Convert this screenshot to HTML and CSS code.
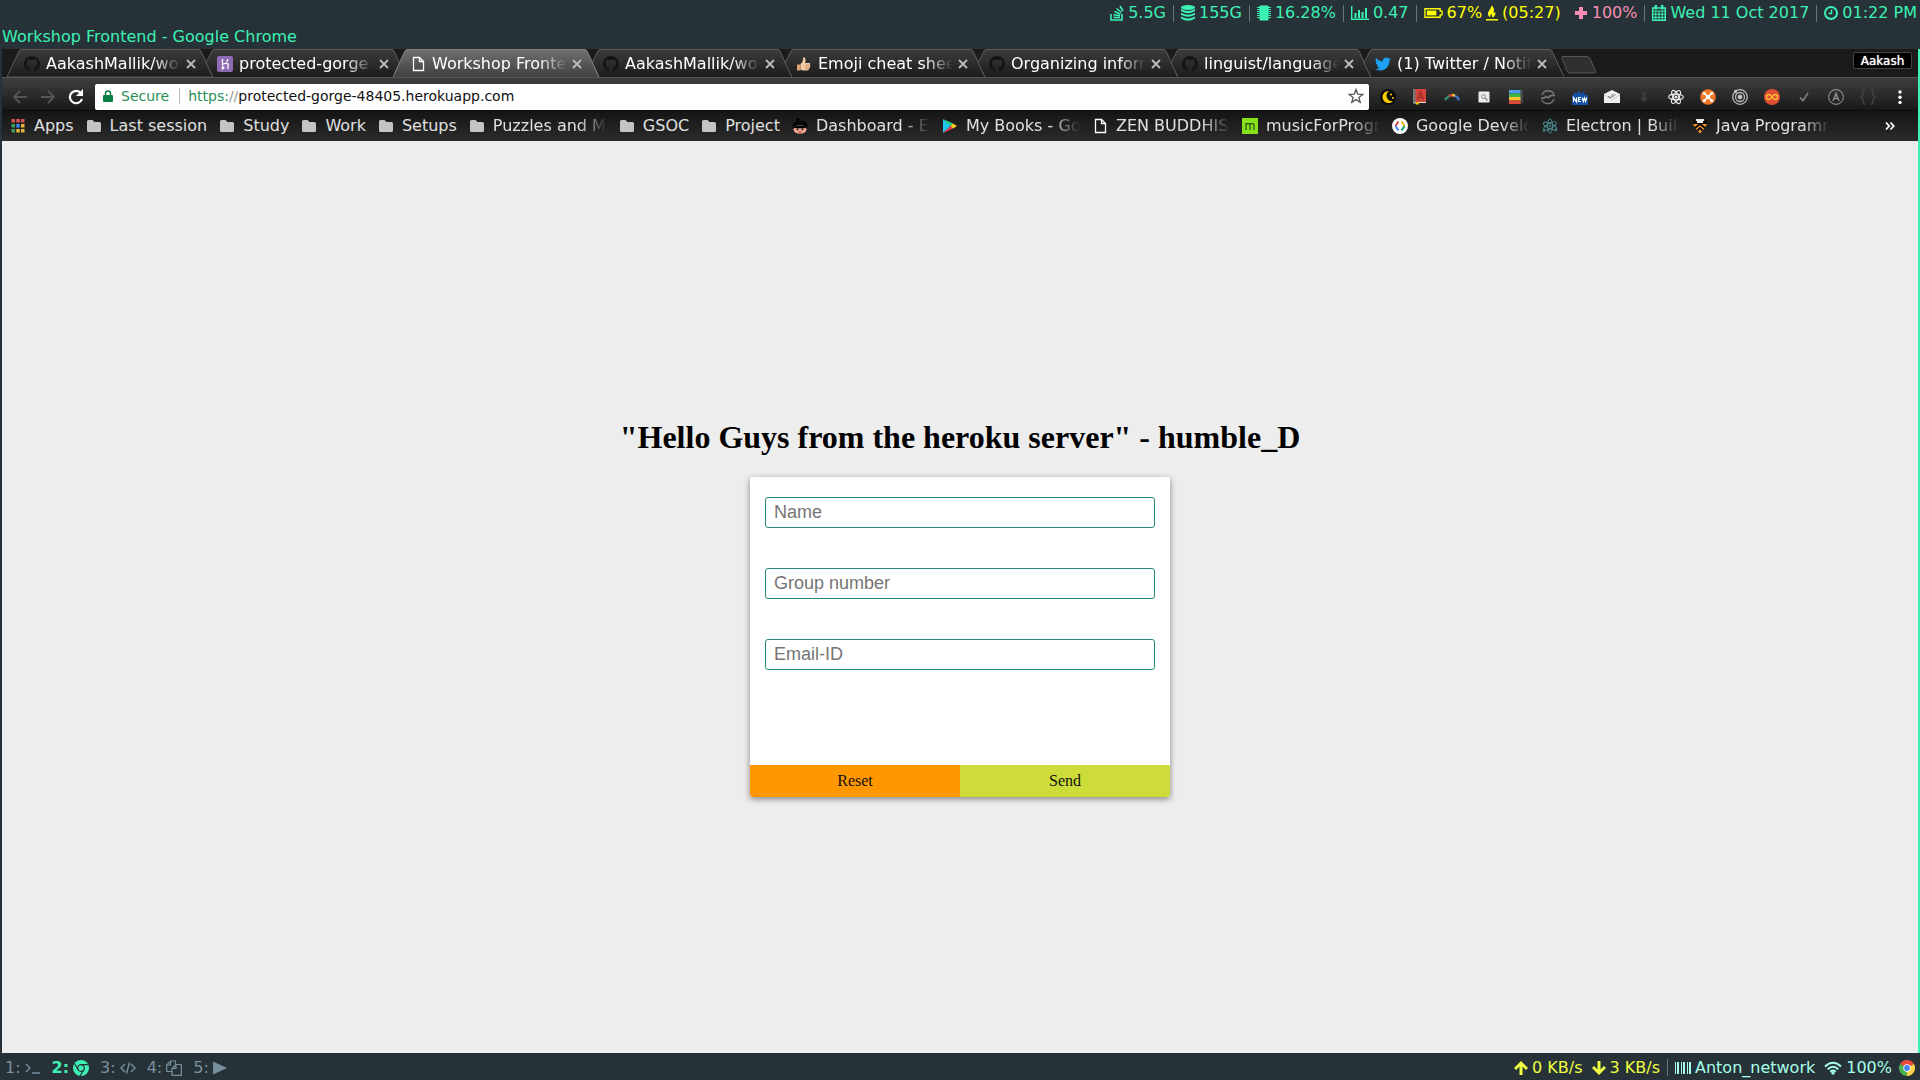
FILE: index.html
```html
<!DOCTYPE html>
<html lang="en">
<head>
<meta charset="utf-8">
<meta name="viewport" content="width=device-width, initial-scale=1">
<title>Workshop Frontend - Google Chrome</title>
<link rel="stylesheet" href="styles.css">
</head>
<body>
<svg class="defs" aria-hidden="true">
  <defs>
    <linearGradient id="tab-fill" x1="0" y1="0" x2="0" y2="1"><stop offset="0" stop-color="#3c3c3c"/><stop offset="1" stop-color="#1c1c1c"/></linearGradient>
    <linearGradient id="tab-fill-active" x1="0" y1="0" x2="0" y2="1"><stop offset="0" stop-color="#707070"/><stop offset="1" stop-color="#404040"/></linearGradient>
    <symbol id="github" viewBox="0 0 16 16"><path d="M8 0C3.58 0 0 3.58 0 8c0 3.54 2.29 6.53 5.47 7.59.4.07.55-.17.55-.38 0-.19-.01-.82-.01-1.49-2.01.37-2.53-.49-2.69-.94-.09-.23-.48-.94-.82-1.13-.28-.15-.68-.52-.01-.53.63-.01 1.08.58 1.23.82.72 1.21 1.87.87 2.33.66.07-.52.28-.87.51-1.07-1.78-.2-3.64-.89-3.64-3.95 0-.87.31-1.59.82-2.15-.08-.2-.36-1.02.08-2.12 0 0 .67-.21 2.2.82a7.6 7.6 0 0 1 4 0c1.53-1.04 2.2-.82 2.2-.82.44 1.1.16 1.92.08 2.12.51.56.82 1.27.82 2.15 0 3.07-1.87 3.75-3.65 3.95.29.25.54.73.54 1.48 0 1.07-.01 1.93-.01 2.2 0 .21.15.46.55.38A8 8 0 0 0 16 8c0-4.42-3.58-8-8-8z" fill="#151515"/></symbol>
    <symbol id="file" viewBox="0 0 16 16"><path d="M3.500 1.500H9.500L13.500 5.500V14.500H3.500zM9.500 1.500V5.500H13.500" fill="none" stroke="#fff" stroke-width="1.300"/></symbol>
    <symbol id="folder" viewBox="0 0 16 16"><path d="M1 3.500Q1 2 2.500 2H6.500L8.500 4H13.500Q15 4 15 5.500V12.500Q15 14 13.500 14H2.500Q1 14 1 12.500z" fill="#c4c4c4"/></symbol>
    <symbol id="cross" viewBox="0 0 16 16"><path d="M4 4L12 12M12 4L4 12" stroke="#bdbdbd" stroke-width="1.800"/></symbol>
    <symbol id="tab-full" viewBox="0 0 206 28"><path d="M0 28L12 2Q13 .5 14 .5H192Q193 .5 194 2L206 28z"/></symbol>
    <symbol id="tab-open" viewBox="0 0 206 28"><path d="M0 28L12 2Q13 .5 14 .5H192Q193 .5 194 2L206 28"/></symbol>
    <symbol id="tab-notch" viewBox="0 0 206 28"><path d="M13 28L6 14L12 2Q13 .5 14 .5H192Q193 .5 194 2L206 28"/></symbol>
  </defs>
</svg>

<header class="status">
  <span class="stat"><svg class="ico" viewBox="0 0 14 16" fill="none" stroke="currentColor" stroke-width="1.600"><path d="M1 9V15H12V9M3.500 12.500H10M3.500 9.800L10 10.800M4.500 6.500L10.500 9.300M6.500 3.500L11.500 7.500M10 1L13 6"/></svg>5.5G</span>
  <i class="sep"></i>
  <span class="stat"><svg class="ico" viewBox="1 0 14 16" fill="currentColor"><ellipse cx="8" cy="2.500" rx="7" ry="2.500"/><path d="M1 4Q8 8 15 4V6Q8 10.500 1 6zM1 7.700Q8 12 15 7.700V9.700Q8 14 1 9.700zM1 11.400Q8 15.500 15 11.400V13.500Q8 18 1 13.500z"/></svg>155G</span>
  <i class="sep"></i>
  <span class="stat"><svg class="ico" viewBox="1 0 14 16"><path d="M3.500.5H12.500V15.500H3.500z" fill="currentColor"/><path d="M1 2.500H15M1 4.500H15M1 6.500H15M1 8.500H15M1 10.500H15M1 12.500H15" stroke="currentColor"/></svg>16.28%</span>
  <i class="sep"></i>
  <span class="stat"><svg class="ico wide" viewBox="0 0 18 16"><path d="M.7 1V14.300H18" fill="none" stroke="currentColor" stroke-width="1.400"/><path d="M4.500 8V13M8 5V13M11.500 7V13M15 3V13" stroke="currentColor" stroke-width="2"/></svg>0.47</span>
  <i class="sep"></i>
  <span class="stat yellow"><svg class="ico battery" viewBox="0 0 20 16"><path d="M1 3.500H17V6H19V10H17V12.500H1z" fill="none" stroke="currentColor" stroke-width="1.400"/><path d="M3 5.500H13V10.500H3z" fill="currentColor"/></svg>67%<svg class="ico flame" viewBox="2 0 13 16" fill="currentColor"><path d="M2 14.500H15V16H2zM8 0Q7.500 3 5 6T6.500 13Q6 10 8.500 8.500Q7.500 11 9.500 13Q13 10 12 7Q11 8 10 7.500Q12 3 8 0z"/></svg>(05:27)</span>
  <span class="stat pink"><svg class="ico" viewBox="1 0 14 16"><path d="M8 2V14M2 8H14" stroke="currentColor" stroke-width="4"/></svg>100%</span>
  <i class="sep"></i>
  <span class="stat"><svg class="ico" viewBox="1 0 14 16"><path d="M1.700 3H14.300V15.300H1.700z" fill="none" stroke="currentColor" stroke-width="1.400"/><path d="M4.800 0V4.500M11.200 0V4.500" stroke="currentColor" stroke-width="2.400"/><path d="M1 6H15M1 9.200H15M1 12.300H15M4.800 6V15M8 6V15M11.200 6V15" stroke="currentColor"/></svg>Wed 11 Oct 2017</span>
  <i class="sep"></i>
  <span class="stat"><svg class="ico" viewBox="1 0 14 16" fill="none" stroke="currentColor" stroke-width="2"><circle cx="8" cy="8" r="6"/><path d="M8.500 4.500V8.500H5.500" stroke-width="1.500"/></svg>01:22 PM</span>
</header>
<p class="window-title">Workshop Frontend - Google Chrome</p>

<div class="window">
  <nav class="tabs" aria-label="Tabs">
    <div class="tab"><svg class="tab-shape"><use href="#tab-full"/></svg><svg class="ico"><use href="#github"/></svg><span class="fade tab-title">AakashMallik/wo</span><button class="plain" aria-label="Close tab"><svg class="ico"><use href="#cross"/></svg></button></div>
    <div class="tab"><svg class="tab-shape"><use href="#tab-notch"/></svg><svg class="ico" viewBox="0 0 16 16"><rect width="16" height="16" rx="2" fill="#8f6bb5"/><path d="M5.500 3V8.500Q8 7 10 7.500T11 10V13M10.800 3Q10.800 4.500 9.500 6M5.500 10.500V13L7 11.800z" fill="none" stroke="#fff" stroke-width="1.300"/></svg><span class="fade tab-title">protected-gorge</span><button class="plain" aria-label="Close tab"><svg class="ico"><use href="#cross"/></svg></button></div>
    <div class="tab active"><svg class="tab-shape"><use href="#tab-open"/></svg><svg class="ico"><use href="#file"/></svg><span class="fade tab-title">Workshop Fronte</span><button class="plain" aria-label="Close tab"><svg class="ico"><use href="#cross"/></svg></button></div>
    <div class="tab"><svg class="tab-shape"><use href="#tab-notch"/></svg><svg class="ico"><use href="#github"/></svg><span class="fade tab-title">AakashMallik/wo</span><button class="plain" aria-label="Close tab"><svg class="ico"><use href="#cross"/></svg></button></div>
    <div class="tab"><svg class="tab-shape"><use href="#tab-notch"/></svg><svg class="ico" viewBox="0 0 16 16"><path d="M1 8.500H4.500V14.500H1z" fill="#d9a577"/><path d="M4.500 8Q7.500 5.500 7 2Q8 .5 9.200 2.500Q10 4.500 9 7H13.500Q15 7.500 14 9Q15 10 13.800 11Q14.500 12 13 12.700Q13 14.500 11 14.500H7L4.500 13.500z" fill="#f5cba3"/><path d="M9.500 9H14M9.500 11H13.500M9 12.800H13" stroke="#b87f4f" stroke-width=".7"/></svg><span class="fade tab-title">Emoji cheat shee</span><button class="plain" aria-label="Close tab"><svg class="ico"><use href="#cross"/></svg></button></div>
    <div class="tab"><svg class="tab-shape"><use href="#tab-notch"/></svg><svg class="ico"><use href="#github"/></svg><span class="fade tab-title">Organizing inforr</span><button class="plain" aria-label="Close tab"><svg class="ico"><use href="#cross"/></svg></button></div>
    <div class="tab"><svg class="tab-shape"><use href="#tab-notch"/></svg><svg class="ico"><use href="#github"/></svg><span class="fade tab-title">linguist/language</span><button class="plain" aria-label="Close tab"><svg class="ico"><use href="#cross"/></svg></button></div>
    <div class="tab"><svg class="tab-shape"><use href="#tab-notch"/></svg><svg class="ico" viewBox="0 0 24 24"><path d="M23.950 4.570a10 10 0 0 1-2.820.77 4.960 4.960 0 0 0 2.160-2.720c-.95.550-2 .95-3.130 1.180a4.920 4.920 0 0 0-8.380 4.480C7.690 8.090 4.070 6.130 1.640 3.160a4.920 4.920 0 0 0 1.520 6.570 4.900 4.900 0 0 1-2.230-.61v.06a4.920 4.920 0 0 0 3.950 4.830 5 5 0 0 1-2.210.08 4.940 4.940 0 0 0 4.600 3.420A9.870 9.870 0 0 1 0 19.540a13.990 13.990 0 0 0 7.550 2.210c9.050 0 14-7.500 14-13.980 0-.21 0-.42-.02-.63a9.940 9.940 0 0 0 2.420-2.570z" fill="#1da1f2"/></svg><span class="fade tab-title">(1) Twitter / Notif</span><button class="plain" aria-label="Close tab"><svg class="ico"><use href="#cross"/></svg></button></div>
    <button class="plain new-tab" aria-label="New tab"><svg width="36" height="18" viewBox="0 0 36 18"><path d="M2 .5H26Q28 .5 29 2.500L34.500 15Q35 17 33 17H9Q7 17 6 15L.8 2.500Q.3.5 2 .5z" fill="#303030" stroke="#565656"/></svg></button>
    <button class="profile">Aakash</button>
  </nav>

  <div class="toolbar">
    <div class="nav-buttons">
      <button class="plain" aria-label="Back"><svg class="ico" viewBox="0 0 16 16"><path d="M15 8H2M8 2L2 8L8 14" fill="none" stroke="#555" stroke-width="1.800"/></svg></button>
      <button class="plain" aria-label="Forward"><svg class="ico" viewBox="0 0 16 16"><path d="M1 8H14M8 2L14 8L8 14" fill="none" stroke="#555" stroke-width="1.800"/></svg></button>
      <button class="plain" aria-label="Reload"><svg class="ico" viewBox="0 0 16 16"><path d="M13 4.200A6.200 6.200 0 1 0 14 10" fill="none" stroke="#fff" stroke-width="2.200"/><path d="M15 0V7H8z" fill="#fff"/></svg></button>
    </div>
    <div class="omnibox">
      <svg class="lock" viewBox="0 0 10 12"><path d="M1 5H9Q10 5 10 6V11Q10 12 9 12H1Q0 12 0 11V6Q0 5 1 5z" fill="#0b8043"/><path d="M2.500 5.500V3.300Q2.500 1 5 1T7.500 3.300V5.500" fill="none" stroke="#0b8043" stroke-width="1.500"/></svg>
      <span class="secure">Secure</span>
      <span class="scheme">https:<span class="slashes">//</span></span>
      <input class="url" type="text" aria-label="Address" value="protected-gorge-48405.herokuapp.com">
      <button class="plain" aria-label="Bookmark this page"><svg class="ico" viewBox="0 0 16 16"><path d="M8 1.500L9.800 6.200L14.700 6.400L10.900 9.500L12.200 14.300L8 11.600L3.800 14.300L5.100 9.500L1.300 6.400L6.200 6.200z" fill="none" stroke="#555" stroke-width="1.300"/></svg></button>
    </div>
    <div class="extensions">
      <svg class="ico" viewBox="0 0 16 16"><circle cx="8" cy="8" r="8" fill="#0c0c0c"/><path d="M9 2A6 6 0 1 0 13 12A5.500 5.500 0 0 1 9 2z" fill="#fc0"/><path d="M10 5.500H12M11 4.500V6.500M12 9H14M13 8V10" stroke="#fc0"/></svg>
      <svg class="ico" viewBox="0 0 16 16"><path d="M1 0H4V15H1z" fill="#777"/><path d="M3.500 0H14V13H3.500z" fill="#d5443b"/><path d="M5.500 11L8.500 3L11.500 11M6.500 8.500H10.500" fill="none" stroke="#a82e28" stroke-width="1.500"/><path d="M3 13.500H14" stroke="#ddd"/><path d="M4 13H7V16L5.500 15L4 16z" fill="#f4c20d"/></svg>
      <svg class="ico" viewBox="0 0 16 16" fill="none" stroke-width="2.500"><path d="M1 11Q3 8 6 6.500" stroke="#2e8b6f"/><path d="M5 7L8 5.800" stroke="#e34133"/><path d="M8 5.800L11 6.800" stroke="#f7c04a"/><path d="M11 6.800Q14 8 15 11" stroke="#3975c6"/></svg>
      <svg class="ico" viewBox="0 0 16 16"><rect x="2.500" y="2.500" width="11" height="11" rx="1" fill="#eee"/><circle cx="7.500" cy="7.500" r="2" fill="none" stroke="#888"/><path d="M9 9L11.500 11.500" stroke="#888" stroke-width="1.300"/></svg>
      <svg class="ico" viewBox="0 0 16 16"><path d="M12 1H15V14L12 15z" fill="#454545"/><path d="M1 1H12.500V4.500H1z" fill="#4d9af0"/><path d="M1 4.500H12.500V8H1z" fill="#3cb54a"/><path d="M1 8H12.500V11.500H1z" fill="#fdc82f"/><path d="M1 11.500H12.500V15H1z" fill="#dd4b39"/></svg>
      <svg class="ico" viewBox="0 0 16 16" fill="none" stroke="#777"><path d="M2 6A6.500 6.500 0 0 1 14 5.500M14 10A6.500 6.500 0 0 1 2 11" stroke-width="1.400"/><path d="M1 9Q4 10 6 7.500Q8 10 10 7Q12 6 15 6.500" stroke-width="1.800"/></svg>
      <svg class="ico" viewBox="0 0 16 16"><path d="M0 6H2L3 3L5 5L7 1L9 5L12 2L13 6H16V16H0z" fill="#124fa5"/><path d="M1.500 13V8.500L4.500 13V8.500M9 8.500H6.500V12.500H9M6.500 10.500H8.500M10.200 8.500L11.300 12.500L12.500 9L13.600 12.500L14.800 8.500" fill="none" stroke="#fff" stroke-width="1.200"/></svg>
      <svg class="ico" viewBox="0 0 16 16"><path d="M0 5L8 1L16 5V14H0z" fill="#f0f0f0"/><path d="M0 5.500L8 11L16 5.500" fill="none" stroke="#ccc"/><path d="M4 7L6 9L9 5M8 8.500L11.500 5" fill="none" stroke="#666"/></svg>
      <svg class="ico" viewBox="0 0 16 16"><path d="M6.500 3H9.500V9H12L8 13L4 9H6.500z" fill="#3d3d3d"/></svg>
      <svg class="ico" viewBox="0 0 16 16" fill="none" stroke="#e8e8e8" stroke-width="1.200"><ellipse cx="8" cy="8" rx="7.300" ry="2.800"/><ellipse cx="8" cy="8" rx="7.300" ry="2.800" transform="rotate(60 8 8)"/><ellipse cx="8" cy="8" rx="7.300" ry="2.800" transform="rotate(120 8 8)"/><circle cx="8" cy="8" r="1" fill="#fff"/></svg>
      <svg class="ico" viewBox="0 0 16 16"><circle cx="8" cy="8" r="7.800" fill="#f37626"/><path d="M4 4L12 12M12 4L4 12" stroke="#fff" stroke-width="1.600"/><circle cx="8" cy="8" r="2.300" fill="#fff"/><circle cx="4.200" cy="4.200" r="1.500" fill="#fff"/><circle cx="11.800" cy="4.200" r="1.500" fill="#fff"/><circle cx="4.200" cy="11.800" r="1.500" fill="#fff"/><circle cx="11.800" cy="11.800" r="1.500" fill="#fff"/></svg>
      <svg class="ico" viewBox="0 0 16 16" fill="none" stroke="#bbb" stroke-width="1.300"><circle cx="8" cy="8" r="7.300"/><circle cx="8" cy="8" r="4.500"/><circle cx="8" cy="8" r="1.800" fill="#ccc"/><circle cx="3.500" cy="2.500" r="1" fill="#ccc"/></svg>
      <svg class="ico" viewBox="0 0 16 16"><circle cx="8" cy="8" r="8" fill="#dd4d35"/><path d="M8 8C6 4.500 2.500 5 2.500 8S6 11.500 8 8S13.500 5 13.500 8S10 11.500 8 8z" fill="none" stroke="#ffc02e" stroke-width="1.400"/></svg>
      <svg class="ico" viewBox="0 0 16 16"><path d="M4 8.500L7 11.500L12 4" fill="none" stroke="#777" stroke-width="1.800"/></svg>
      <svg class="ico" viewBox="0 0 16 16" fill="none" stroke="#8a8a8a"><circle cx="8" cy="8" r="7.400" stroke-width="1.100"/><path d="M5 12L8 4.500L11 12M6 9.500H10" stroke-width="1.600"/></svg>
      <svg class="ico" viewBox="0 0 16 16" fill="none" stroke="#444" stroke-width="1.300"><path d="M5 1Q3 1 3 3V6L1 8L3 10V13Q3 15 5 15M11 1Q13 1 13 3V6L15 8L13 10V13Q13 15 11 15"/></svg>
      <button class="plain" aria-label="Menu"><svg class="ico" viewBox="0 0 16 16" fill="#fff"><circle cx="8" cy="3" r="1.700"/><circle cx="8" cy="8.200" r="1.700"/><circle cx="8" cy="13.400" r="1.700"/></svg></button>
    </div>
  </div>

  <nav class="bookmarks" aria-label="Bookmarks">
    <a href="#"><svg class="ico" viewBox="0 0 16 16"><path d="M1.500 1H5V4.500H1.500zM6.300 1H9.800V4.500H6.300zM11 1H14.500V4.500H11z" fill="#d9534f"/><path d="M1.500 6H5V9.500H1.500z" fill="#3f9d5c"/><path d="M6.300 6H9.800V9.500H6.300z" fill="#4285f4"/><path d="M11 6H14.500V9.500H11zM6.300 11H9.800V14.500H6.300zM11 11H14.500V14.500H11z" fill="#e9b537"/><path d="M1.500 11H5V14.500H1.500z" fill="#3f9d5c"/></svg><span>Apps</span></a>
    <a href="#"><svg class="ico"><use href="#folder"/></svg><span>Last session</span></a>
    <a href="#"><svg class="ico"><use href="#folder"/></svg><span>Study</span></a>
    <a href="#"><svg class="ico"><use href="#folder"/></svg><span>Work</span></a>
    <a href="#"><svg class="ico"><use href="#folder"/></svg><span>Setups</span></a>
    <a href="#"><svg class="ico"><use href="#folder"/></svg><span class="fade long">Puzzles and M</span></a>
    <a href="#"><svg class="ico"><use href="#folder"/></svg><span>GSOC</span></a>
    <a href="#"><svg class="ico"><use href="#folder"/></svg><span>Project</span></a>
    <a href="#"><svg class="ico" viewBox="0 0 16 16"><circle cx="6" cy="1.800" r="1.800" fill="#000"/><ellipse cx="8" cy="7.500" rx="7.500" ry="5" fill="#070707"/><ellipse cx="8" cy="11.500" rx="6.500" ry="4.300" fill="#efa68d"/><path d="M1.500 9.500Q8 5.500 14.500 9.500L12 10.200H4z" fill="#000"/><circle cx="5.500" cy="11.300" r="1" fill="#222"/><circle cx="10.500" cy="11.300" r="1" fill="#222"/><path d="M6.500 14H9.500" stroke="#a5323a"/></svg><span class="fade long">Dashboard - E</span></a>
    <a href="#"><svg class="ico" viewBox="0 0 16 16"><path d="M1 1V15L8.500 8z" fill="#22c7f3"/><path d="M1 1L11 5.500L8.500 8z" fill="#25d58a"/><path d="M1 15L11 10.500L8.500 8z" fill="#ed3c55"/><path d="M11 5.500L15 8L11 10.500L8.500 8z" fill="#ffce18"/></svg><span class="fade long">My Books - Go</span></a>
    <a href="#"><svg class="ico"><use href="#file"/></svg><span class="fade long">ZEN BUDDHIS</span></a>
    <a href="#"><svg class="ico" viewBox="0 0 16 16"><path d="M0 0H16V16H0z" fill="#87e21c"/><path d="M4 12V5M4 7Q4 5.500 6 5.500T8 7V12M8 7Q8 5.500 10 5.500T12 7V12" fill="none" stroke="#315a0b" stroke-width="1.300"/></svg><span class="fade long">musicForProgr</span></a>
    <a href="#"><svg class="ico" viewBox="0 0 16 16" fill="none" stroke-width="2"><circle cx="8" cy="8" r="8" fill="#fff"/><path d="M6.500 3.500L3.500 8" stroke="#db4437"/><path d="M3.500 8L6.500 12.500" stroke="#4285f4"/><path d="M9.500 3.500L12.500 8" stroke="#f4b400"/><path d="M12.500 8L9.500 12.500" stroke="#0f9d58"/></svg><span class="fade long">Google Develo</span></a>
    <a href="#"><svg class="ico" viewBox="0 0 16 16" fill="none" stroke="#478b91"><ellipse cx="8" cy="8" rx="7" ry="2.600" transform="rotate(25 8 8)"/><ellipse cx="8" cy="8" rx="7" ry="2.600" transform="rotate(90 8 8)"/><ellipse cx="8" cy="8" rx="7" ry="2.600" transform="rotate(150 8 8)"/><circle cx="8" cy="8" r=".8"/><circle cx="2" cy="12.500" r="1"/><circle cx="14" cy="12" r="1"/></svg><span class="fade long">Electron | Build</span></a>
    <a href="#"><svg class="ico" viewBox="0 0 16 16"><path d="M4 1H12V5H4z" fill="#e8e8e8"/><path d="M1 3H5V5H11V3H15V6H1z" fill="#080808"/><path d="M1 6H15L12 11L8 15.500L4 11z" fill="#f0932b"/><path d="M3 10L8 6L13 10M5.500 12.500L8 10L10.500 12.500" fill="none" stroke="#0b0b0b" stroke-width="1.800"/></svg><span class="fade long">Java Programr</span></a>
    <button class="plain more" aria-label="More bookmarks"><svg class="ico" viewBox="0 0 16 16"><path d="M4 4.500L7.200 8L4 11.500M8.500 4.500L11.700 8L8.500 11.500" fill="none" stroke="#fff" stroke-width="1.800"/></svg></button>
  </nav>

  <main class="page">
    <h1>"Hello Guys from the heroku server" - humble_D</h1>
    <form class="card">
      <div class="fields">
        <input type="text" placeholder="Name" aria-label="Name">
        <input type="text" placeholder="Group number" aria-label="Group number">
        <input type="email" placeholder="Email-ID" aria-label="Email-ID">
      </div>
      <div class="actions">
        <button class="reset" type="reset">Reset</button>
        <button class="send" type="submit">Send</button>
      </div>
    </form>
  </main>
</div>

<footer class="footer">
  <nav class="workspaces" aria-label="Workspaces">
    <a href="#">1:<svg class="ico" viewBox="0 0 16 16" fill="none" stroke="currentColor" stroke-width="1.400"><path d="M1 4L5 8L1 12M7 13H15"/></svg></a>
    <a class="current" href="#">2:<svg class="ico" viewBox="0 0 16 16"><circle cx="8" cy="8" r="8" fill="currentColor"/><circle cx="8" cy="8" r="3.300" fill="none" stroke="#263238" stroke-width="1.200"/><path d="M8 4.700H15.500M5.200 9.700L1.500 3.500M10.800 9.700L7 16" stroke="#263238" stroke-width="1.200"/></svg></a>
    <a href="#">3:<svg class="ico" viewBox="0 0 16 16" fill="none" stroke="currentColor" stroke-width="1.400"><path d="M5 4L1 8L5 12M11 4L15 8L11 12M9.500 2.500L6.500 13.500"/></svg></a>
    <a href="#">4:<svg class="ico" viewBox="0 0 16 16" fill="none" stroke="currentColor" stroke-width="1.200"><path d="M6 11.500H.7V5L4.500 1H9.500V4.500M4.500 1V5H.7M6 8.500L10 4.500H15.300V15.300H6zM10 4.500V8.500H6"/></svg></a>
    <a href="#">5:<svg class="ico" viewBox="0 0 16 16"><path d="M0 1.500L14 8L0 14.500z" fill="currentColor"/></svg></a>
  </nav>
  <div class="network">
    <span class="stat lime"><svg class="ico" viewBox="1 0 14 16" fill="none" stroke="currentColor" stroke-width="3"><path d="M8 15V3M2 9L8 3L14 9"/></svg>0 KB/s</span>
    <span class="stat lime"><svg class="ico" viewBox="1 0 14 16" fill="none" stroke="currentColor" stroke-width="3"><path d="M8 1V13M2 7L8 13L14 7"/></svg>3 KB/s</span>
    <i class="sep"></i>
    <span class="stat aqua"><svg class="ico barcode" viewBox="0 0 16 16"><path d="M.5 2V14M6.500 2V14M12.500 2V14" stroke="currentColor"/><path d="M3 2V14M9 2V14M15 2V14" stroke="currentColor" stroke-width="2"/></svg>Anton_network</span>
    <span class="stat aqua signal"><svg class="ico wide" viewBox="0 0 18 16" fill="none" stroke="currentColor" stroke-width="2"><path d="M1 6.500Q9-1 17 6.500M3.700 9.300Q9 4.300 14.300 9.300M6.300 11.700Q9 9.300 11.700 11.700"/><circle cx="9" cy="13" r=".8"/></svg>100%</span>
    <svg class="ico" viewBox="0 0 16 16"><path d="M8 8L1.070 4A8 8 0 0 1 14.930 4z" fill="#e94b3c"/><path d="M8 8L8 16A8 8 0 0 1 1.070 4z" fill="#4caf50"/><path d="M8 8L14.930 4A8 8 0 0 1 8 16z" fill="#fdd24a"/><circle cx="8" cy="8" r="3.700" fill="#fff"/><circle cx="8" cy="8" r="2.900" fill="#4285f4"/></svg>
  </div>
</footer>
</body>
</html>
```
FILE: styles.css
```css
* { box-sizing: border-box; }

body {
  margin: 0;
  min-height: 100vh;
  display: flex;
  flex-direction: column;
  background: #263238;
  color: #3df0b4;
  font: 16px/24px "DejaVu Sans", sans-serif;
}

.defs { position: absolute; width: 0; height: 0; }
.ico { display: block; flex: none; width: 16px; height: 16px; }
.stat .ico { width: 14px; }
.stat .ico.wide { width: 18px; }
.stat .ico.battery { width: 19px; }
.stat .ico.flame { width: 12px; }
.stat .ico.barcode { width: 16px; }

.plain {
  flex: none;
  padding: 0;
  border: 0;
  background: none;
}

/* status line */
.status {
  display: flex;
  justify-content: flex-end;
  align-items: center;
  gap: 7px;
  height: 24px;
  padding: 2px 3px 0;
}
.stat { display: flex; align-items: center; gap: 4px; white-space: nowrap; }
.sep { width: 1px; height: 17px; background: #66767d; }
.yellow { color: #ffff00; }
.pink { color: #f48fb1; margin-left: 6px; }
.lime { color: #eeff41; }
.aqua { color: #a7ffeb; }
.window-title {
  margin: 0;
  height: 25px;
  padding-left: 2px;
  line-height: 26px;
}

/* browser window */
.window {
  flex: 1;
  display: flex;
  flex-direction: column;
  margin-left: 2px;
  border-right: 2px solid #3df0b4;
}

.tabs {
  display: flex;
  height: 28px;
  padding: 0 6px 0 5px;
  background: #1b1b1b;
}
.tab {
  position: relative;
  flex: 0 1 206px;
  min-width: 0;
  display: flex;
  align-items: center;
  gap: 6px;
  padding: 1px 14px 0 17px;
  color: #fff;
}
.tab + .tab { margin-left: -13px; }
.tab > * { position: relative; }
.tab > .tab-shape {
  position: absolute;
  inset: 0;
  width: 100%;
  height: 100%;
  fill: url(#tab-fill);
  stroke: #5c5c5c;
}
.tab.active { z-index: 1; }
.tab.active > .tab-shape { fill: url(#tab-fill-active); stroke: #858585; }
.tab-title { flex: 1; margin-right: -4px; }
.fade {
  min-width: 0;
  overflow: hidden;
  white-space: nowrap;
  -webkit-mask-image: linear-gradient(to left, transparent, #000 28px);
  mask-image: linear-gradient(to left, transparent, #000 28px);
}
.new-tab { margin: 7px 0 0 -3px; height: 18px; }
.new-tab svg { display: block; }
.profile {
  margin: 3px 0 0 auto;
  width: 59px;
  height: 17px;
  padding: 0;
  border: 1px solid #444;
  border-radius: 2px;
  background: #000;
  color: #fff;
  font: 12px/14px "DejaVu Sans", sans-serif;
  text-shadow: 0 0 1px #fff;
}

.toolbar {
  display: flex;
  align-items: center;
  gap: 11px;
  height: 33px;
  padding: 5px 10px 0;
  border-top: 1px solid #555;
  background: linear-gradient(#3e3e3e, #191919);
}
.nav-buttons { display: flex; gap: 12px; }
.omnibox {
  flex: 1;
  display: flex;
  align-items: center;
  height: 26px;
  padding: 0 5px 2px 8px;
  border-radius: 2px;
  background: #fff;
  font-size: 14px;
}
.lock { width: 10px; height: 12px; margin-right: 8px; }
.secure {
  padding-right: 10px;
  border-right: 1px solid #bbb;
  margin-right: 8px;
  line-height: 16px;
  color: #2a9058;
}
.scheme { color: #2a9058; }
.slashes { color: #999; }
.url {
  flex: 1;
  min-width: 0;
  padding: 0;
  border: 0;
  outline: 0;
  background: none;
  color: #111;
  font: inherit;
}
.extensions { display: flex; gap: 16px; }

.bookmarks {
  display: flex;
  align-items: center;
  gap: 12px;
  height: 31px;
  padding: 0 20px 0 8px;
  border-top: 1px solid #0c0c0c;
  background: linear-gradient(#151515, #2b2b2b);
}
.bookmarks a {
  display: flex;
  align-items: center;
  gap: 8px;
  color: #e0e0e0;
  text-decoration: none;
  white-space: nowrap;
}
.long { width: 114px; }
.more { margin-left: auto; }

/* page */
.page {
  flex: 1;
  display: flex;
  flex-direction: column;
  align-items: center;
  justify-content: center;
  background: #ededed;
}
h1 {
  margin: 21px 0;
  color: #000;
  font: bold 32px/37px "Liberation Serif", serif;
}
.card {
  width: 420px;
  max-width: 100%;
  border-radius: 3px;
  overflow: hidden;
  background: #fff;
  box-shadow: 0 2px 6px rgba(0, 0, 0, .45);
}
.fields {
  display: flex;
  flex-direction: column;
  gap: 40px;
  padding: 20px 15px 95px;
}
.fields input {
  height: 31px;
  padding: 0 8px;
  border: 1px solid #26897b;
  border-radius: 3px;
  background: #fff;
  font: 18px "Liberation Sans", sans-serif;
}
.fields input::placeholder { color: #757575; }
.actions { display: flex; }
.actions button {
  flex: 1;
  height: 32px;
  border: 0;
  color: #111;
  font: 16px "Liberation Serif", serif;
}
.reset { background: #ff9800; }
.send { background: #cddc39; }

/* bottom bar */
.footer {
  display: flex;
  justify-content: space-between;
  align-items: center;
  height: 27px;
  padding: 2px 5px 0 5px;
}
.workspaces { display: flex; gap: 11px; }
.workspaces a {
  display: flex;
  align-items: center;
  gap: 4px;
  color: #78909c;
  text-decoration: none;
}
.workspaces .current { color: #3df0b4; font-weight: bold; }
.network { display: flex; align-items: center; gap: 7px; }
.lime + .lime { margin-left: 2px; }
.signal { margin-left: 2px; }
```
